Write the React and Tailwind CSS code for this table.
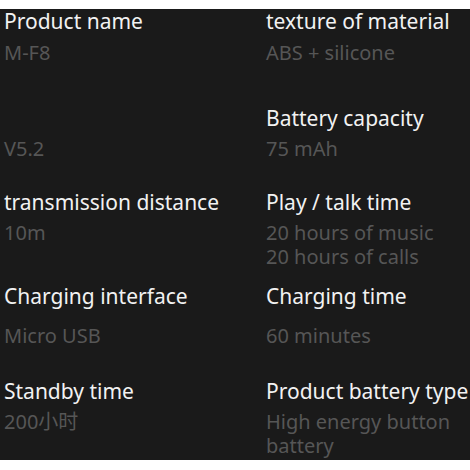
import React from 'react';

const rows = [
    {
        mt: 'mt-0',
        gap: 'mt-[8px]',
        cells: [
            { title: 'Product name', values: ['M-F8'] },
            { title: 'texture of material', values: ['ABS + silicone'] },
        ],
    },
    {
        mt: 'mt-[41px]',
        gap: 'mt-[7px]',
        cells: [
            { title: '', values: ['V5.2'] },
            { title: 'Battery capacity', values: ['75 mAh'] },
        ],
    },
    {
        mt: 'mt-[29px]',
        gap: 'mt-[7px]',
        cells: [
            { title: 'transmission distance', values: ['10m'] },
            { title: 'Play / talk time', values: ['20 hours of music', '20 hours of calls'] },
        ],
    },
    {
        mt: 'mt-[15px]',
        gap: 'mt-[16px]',
        cells: [
            { title: 'Charging interface', values: ['Micro USB'] },
            { title: 'Charging time', values: ['60 minutes'] },
        ],
    },
    {
        mt: 'mt-[31px]',
        gap: 'mt-[7px]',
        cells: [
            { title: 'Standby time', values: ['200小时'] },
            { title: 'Product battery type', values: ['High energy button', 'battery'] },
        ],
    },
];

const Cell = ({ title, values, gap }) => (
    <div>
        <div className="h-[24px] text-[21px] leading-[24px] text-[#f2f2f2] whitespace-nowrap">{title}</div>
        <div className={`${gap} text-[20px] leading-[24px] text-[#565656]`}>
            {values.map((v) => (
                <div key={v} className="whitespace-nowrap">{v}</div>
            ))}
        </div>
    </div>
);

export default function App() {
    return (
        <div
            className="h-[470px] w-[470px] overflow-hidden bg-white pt-[9px]"
            style={{ fontFamily: '"Noto Sans", "Noto Sans CJK SC", sans-serif' }}
        >
            <div className="h-[451px] bg-[#1a1a1a] pl-1">
                {rows.map((row, i) => (
                    <div key={i} className={`grid grid-cols-[262px_1fr] ${row.mt}`}>
                        {row.cells.map((c, j) => (
                            <Cell key={j} title={c.title} values={c.values} gap={row.gap} />
                        ))}
                    </div>
                ))}
            </div>
        </div>
    );
}
